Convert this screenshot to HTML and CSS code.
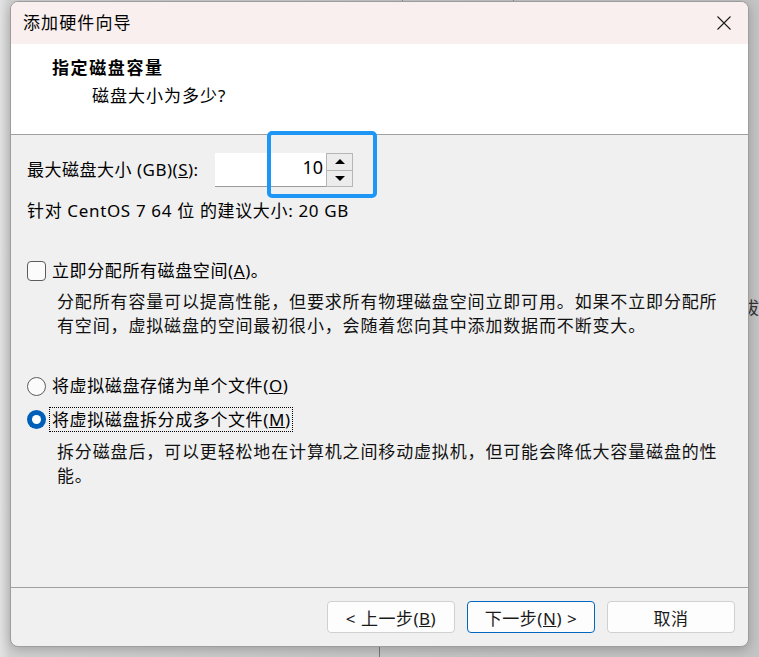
FILE: index.html
```html
<!DOCTYPE html>
<html lang="zh-CN">
<head>
<meta charset="utf-8">
<title>添加硬件向导</title>
<link rel="stylesheet" href="styles.css">
</head>
<body>
  <div class="bg-piece bg-line-a"></div>
  <div class="bg-piece bg-line-b"></div>
  <div class="bg-piece bg-line-c"></div>
  <div class="bg-piece bg-char">拔</div>
  <div class="dialog">
    <div class="titlebar">
      <span class="title">添加硬件向导</span>
      <svg class="close" viewBox="0 0 14 14" aria-hidden="true"><path d="M0.5 0.5 L13.5 13.5 M13.5 0.5 L0.5 13.5" stroke="#1a1a1a" stroke-width="1.1" fill="none"/></svg>
    </div>
    <div class="header">
      <div class="h-title">指定磁盘容量</div>
      <div class="h-sub">磁盘大小为多少?</div>
    </div>
    <div class="main">
      <div class="size-row">
        <span class="size-label">最大磁盘大小 (GB)(<u>S</u>):</span>
        <div class="spin">
          <div class="spin-input">10</div>
          <div class="spin-btns">
            <div class="spin-btn"><span class="tri-up"></span></div>
            <div class="spin-btn"><span class="tri-down"></span></div>
          </div>
        </div>
      </div>
      <div class="rec">针对 CentOS 7 64 位 的建议大小: 20 GB</div>
      <div class="opt-row check-row">
        <span class="checkbox"></span>
        <span class="opt-label">立即分配所有磁盘空间(<u>A</u>)。</span>
      </div>
      <p class="desc">分配所有容量可以提高性能，但要求所有物理磁盘空间立即可用。如果不立即分配所<br>有空间，虚拟磁盘的空间最初很小，会随着您向其中添加数据而不断变大。</p>
      <div class="opt-row radio-row-1">
        <span class="radio"></span>
        <span class="opt-label">将虚拟磁盘存储为单个文件(<u>O</u>)</span>
      </div>
      <div class="opt-row radio-row-2">
        <span class="radio on"></span>
        <span class="opt-label focus">将虚拟磁盘拆分成多个文件(<u>M</u>)</span>
      </div>
      <p class="desc desc-2">拆分磁盘后，可以更轻松地在计算机之间移动虚拟机，但可能会降低大容量磁盘的性<br>能。</p>
    </div>
    <div class="footer">
      <button class="btn">&lt; 上一步(<u>B</u>)</button>
      <button class="btn primary">下一步(<u>N</u>) &gt;</button>
      <button class="btn">取消</button>
    </div>
    <div class="highlight"></div>
  </div>
</body>
</html>
```
FILE: styles.css
```css
* { box-sizing: border-box; }
html { margin: 0; }
body {
  margin: 0;
  width: 759px;
  height: 657px;
  padding: 1px 0 0 10px;
  position: relative;
  overflow: hidden;
  background: linear-gradient(90deg, #e2e2e2 0, #d2d2d2 10px, #c6c6c6 60%, #c4c4c4 100%);
  font-family: "Noto Sans", "Noto Sans CJK SC", sans-serif;
  color: #000;
}
.bg-piece { position: absolute; }
.bg-line-a { left: 402px; top: 0; width: 1px; height: 4px; background: #8c8c8c; }
.bg-line-b { left: 513px; top: 0; width: 1px; height: 4px; background: #8c8c8c; }
.bg-line-c { left: 379px; top: 644px; width: 1px; height: 13px; background: #7a7a7a; }
.bg-char { left: 742px; top: 296px; font-size: 17px; line-height: 24px; color: #333; }

.dialog {
  position: relative;
  z-index: 1;
  width: 739px;
  height: 646px;
  border: 1px solid #9d9d9d;
  border-radius: 8px;
  background: #f0f0f0;
  box-shadow: 0 3px 12px rgba(0, 0, 0, 0.22);
  overflow: hidden;
  display: flex;
  flex-direction: column;
}
.titlebar {
  flex: none;
  height: 42px;
  background: #f9efee;
  display: flex;
  align-items: center;
  justify-content: space-between;
  padding: 0 17px 0 12px;
}
.title { font-size: 17px; line-height: 24px; letter-spacing: 1.1px; }
.close { width: 14px; height: 14px; display: block; }

.header {
  flex: none;
  height: 91px;
  background: #fff;
  border-bottom: 1px solid #a0a0a0;
  padding: 12px 0 0 41px;
}
.h-title { font-size: 17px; line-height: 24px; font-weight: bold; letter-spacing: 1.6px; }
.h-sub { font-size: 17px; line-height: 24px; margin: 4px 0 0 40px; letter-spacing: 1px; }

.main {
  flex: none;
  height: 452px;
  padding: 18px 0 0 16px;
  font-size: 17px;
}
.size-row { display: flex; align-items: center; height: 34px; }
.size-label { width: 188px; line-height: 24px; letter-spacing: 0.5px; }
.spin { display: flex; height: 34px; }
.spin-input {
  width: 111px;
  background: #fff;
  border-bottom: 1px solid #9a9a9a;
  text-align: right;
  padding-right: 3px;
  font-size: 18px;
  line-height: 28px;
}
.spin-btns { width: 27px; display: flex; flex-direction: column; }
.spin-btn {
  flex: 1;
  border: 1px solid #b6b6b6;
  background: #ececec;
  display: flex;
  align-items: center;
  justify-content: center;
}
.spin-btn + .spin-btn { border-top: none; }
.tri-up { width: 0; height: 0; border-left: 5px solid transparent; border-right: 5px solid transparent; border-bottom: 5px solid #000; }
.tri-down { width: 0; height: 0; border-left: 5px solid transparent; border-right: 5px solid transparent; border-top: 5px solid #000; }

.rec { margin-top: 12px; line-height: 24px; letter-spacing: 0.65px; }

.opt-row { display: flex; align-items: center; height: 24px; }
.check-row { margin-top: 36px; gap: 6px; }
.checkbox {
  width: 19px;
  height: 20px;
  border: 1px solid #5c5c5c;
  border-radius: 4px;
  background: #fbfbfb;
}
.opt-label { line-height: 24px; letter-spacing: 0.6px; }

.desc {
  margin: 7px 0 0 30px;
  line-height: 24px;
  letter-spacing: 0.85px;
  white-space: nowrap;
  color: #111;
}
.radio-row-1 { margin-top: 36px; gap: 6px; }
.radio-row-2 { margin-top: 9px; gap: 4px; }
.radio {
  width: 19px;
  height: 19px;
  border-radius: 50%;
  border: 1px solid #5c5c5c;
  background: #fbfbfb;
  position: relative;
}
.radio.on { border: none; background: #005fb8; }
.radio.on::after {
  content: "";
  position: absolute;
  left: 5px;
  top: 5px;
  width: 9px;
  height: 9px;
  border-radius: 50%;
  background: #fff;
}
.focus { outline: 1px dotted #000; padding: 0 1px 0 2px; line-height: 23px; }
.desc-2 { margin-top: 9px; }

.footer {
  flex: 1;
  border-top: 1px solid #a0a0a0;
  display: flex;
  justify-content: flex-end;
  align-items: flex-start;
  gap: 12px;
  padding: 13px 13px 0 0;
}
.btn {
  width: 128px;
  height: 32px;
  border: 1px solid #d0d0d0;
  border-radius: 4px;
  background: #fdfdfd;
  font-family: inherit;
  font-size: 17px;
  color: #1a1a1a;
  padding: 0;
  letter-spacing: 0.5px;
}
.btn.primary { border-color: #0067c0; }

.highlight {
  position: absolute;
  left: 256px;
  top: 129px;
  width: 110px;
  height: 67px;
  border: 4px solid #1e96f5;
  border-radius: 5px;
}
```
